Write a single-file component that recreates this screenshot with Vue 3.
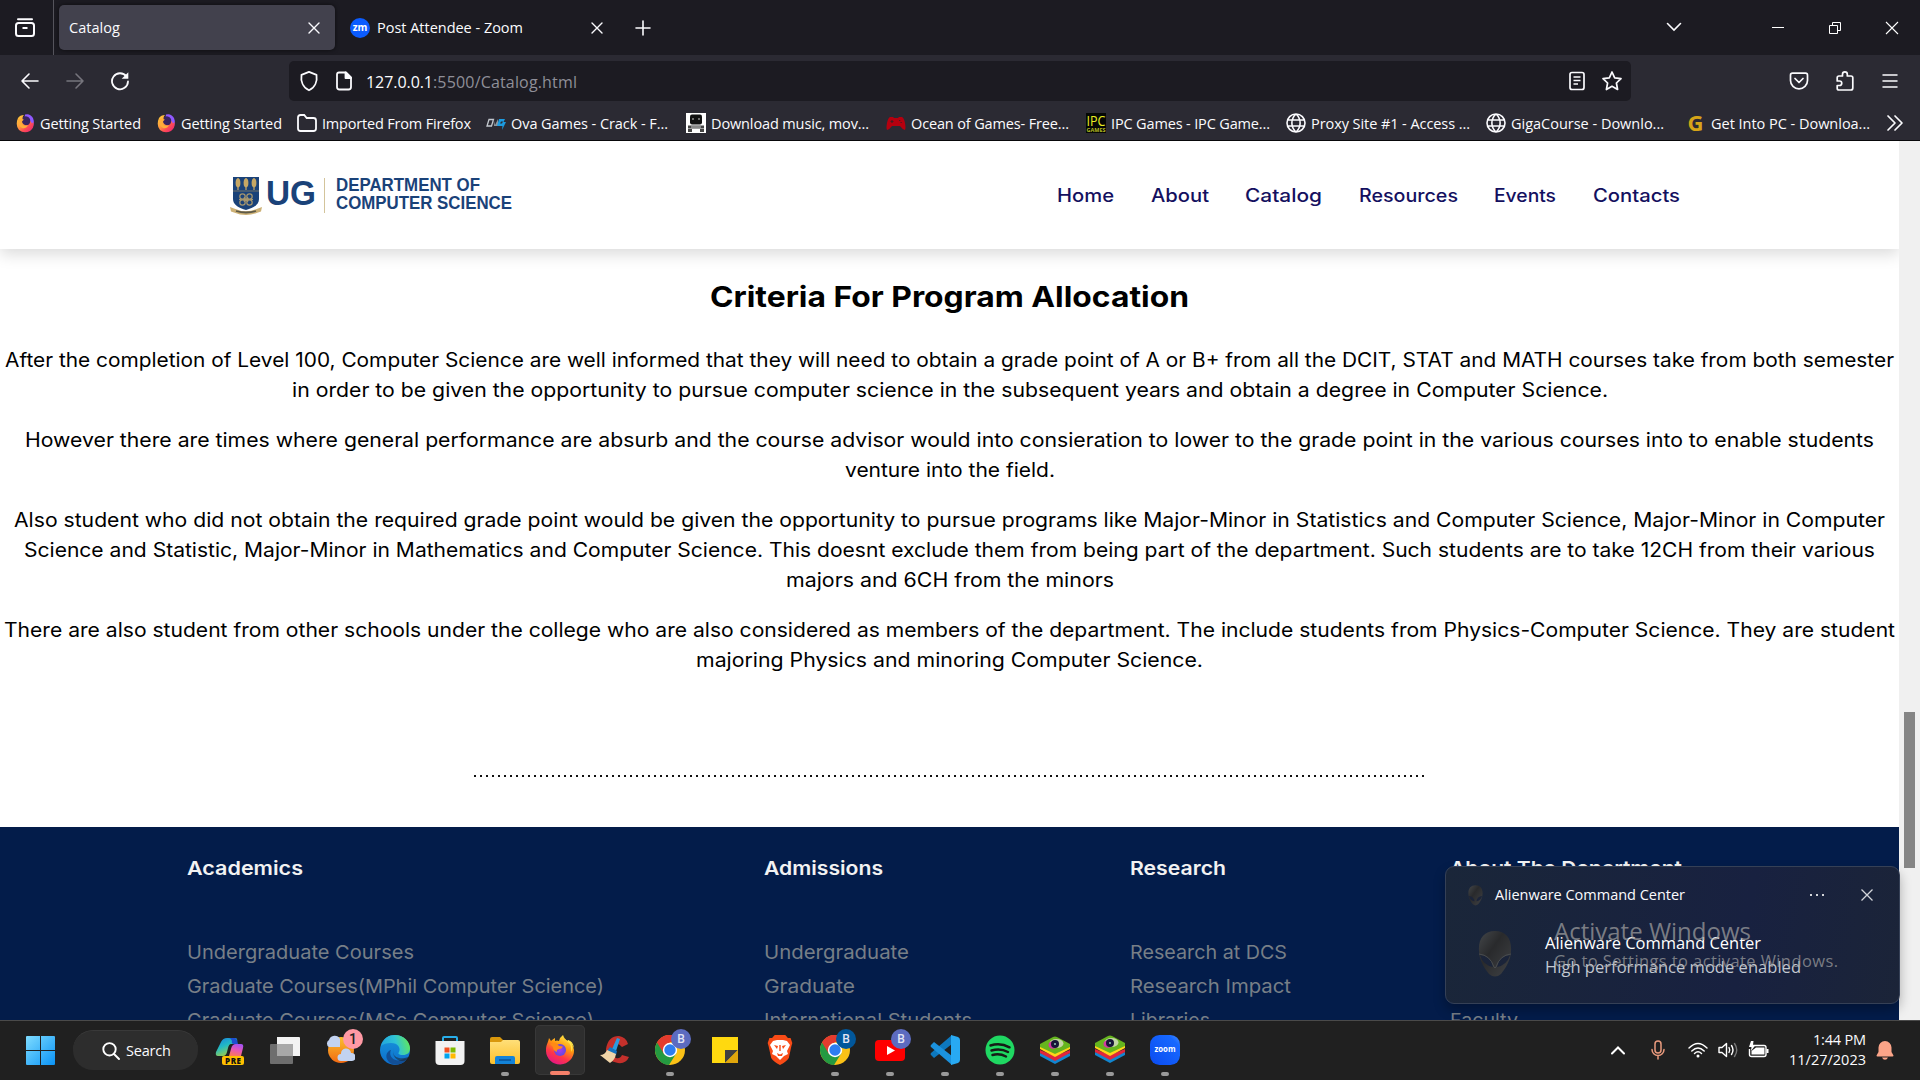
<script setup>
// Fits a line of text to a given width (px): by letter spacing,
// or with the .wide modifier by scaling the line horizontally.
const vFit = {
  mounted(el, { value, modifiers }) {
    const natural = el.getBoundingClientRect().width
    if (modifiers.wide) {
      el.style.transformOrigin = '0 50%'
      el.style.transform = `scaleX(${value / natural})`
      el.style.marginRight = value - natural + 'px'
      return
    }
    const spacing = (value - natural) / (el.textContent.length - 1)
    el.style.letterSpacing = spacing + 'px'
    el.style.marginRight = -spacing + 'px'
  }
}

const bookmarks = [
  { icon: 'fox', text: 'Getting Started', w: 101, cell: 141 },
  { icon: 'fox', text: 'Getting Started', w: 101, cell: 141 },
  { icon: 'folder', text: 'Imported From Firefox', w: 149, cell: 189 },
  { icon: 'ova', text: 'Ova Games - Crack - F...', w: 157, cell: 200 },
  { icon: 'truck', text: 'Download music, mov...', w: 158, cell: 200 },
  { icon: 'pad', text: 'Ocean of Games- Free...', w: 158, cell: 200 },
  { icon: 'ipc', text: 'IPC Games - IPC Game...', w: 159, cell: 200 },
  { icon: 'globe', text: 'Proxy Site #1 - Access ...', w: 159, cell: 200 },
  { icon: 'globe', text: 'GigaCourse - Downlo...', w: 153, cell: 200 },
  { icon: 'g', text: 'Get Into PC - Downloa...', w: 159, cell: 200 }
]

const nav = [
  ['Home', 57, 94],
  ['About', 58, 94],
  ['Catalog', 77, 114],
  ['Resources', 99, 135],
  ['Events', 62, 99],
  ['Contacts', 87, 87]
]

const paragraphs = [
  [
    ['After the completion of Level 100, Computer Science are well informed that they will need to obtain a grade point of A or B+ from all the DCIT, STAT and MATH courses take from both semester', 1889],
    ['in order to be given the opportunity to pursue computer science in the subsequent years and obtain a degree in Computer Science.', 1316]
  ],
  [
    ['However there are times where general performance are absurb and the course advisor would into consieration to lower to the grade point in the various courses into to enable students', 1849],
    ['venture into the field.', 210]
  ],
  [
    ['Also student who did not obtain the required grade point would be given the opportunity to pursue programs like Major-Minor in Statistics and Computer Science, Major-Minor in Computer', 1871],
    ['Science and Statistic, Major-Minor in Mathematics and Computer Science. This doesnt exclude them from being part of the department. Such students are to take 12CH from their various', 1851],
    ['majors and 6CH from the minors', 328]
  ],
  [
    ['There are also student from other schools under the college who are also considered as members of the department. The include students from Physics-Computer Science. They are student', 1891],
    ['majoring Physics and minoring Computer Science.', 507]
  ]
]

const footer = [
  {
    head: ['Academics', 116],
    links: [['Undergraduate Courses', 227], ['Graduate Courses(MPhil Computer Science)', 417], ['Graduate Courses(MSc Computer Science)', 407]]
  },
  { head: ['Admissions', 119], links: [['Undergraduate', 145], ['Graduate', 91], ['International Students', 208]] },
  { head: ['Research', 96], links: [['Research at DCS', 157], ['Research Impact', 161], ['Libraries', 80]] },
  { head: ['About The Department', 232], links: [['', 0], ['', 0], ['Faculty', 68]] }
]

const apps = [
  { id: 'copilot' },
  { id: 'taskview' },
  { id: 'weather', badge: '1', color: '#ff99a4' },
  { id: 'edge' },
  { id: 'store' },
  { id: 'files', open: true },
  { id: 'firefox', active: true },
  { id: 'cc' },
  { id: 'chrome', open: true, badge: 'B', color: '#5c6bc0' },
  { id: 'notes' },
  { id: 'brave' },
  { id: 'chrome', open: true, badge: 'B', color: '#01579b' },
  { id: 'youtube', open: true, badge: 'B', color: '#5c6bc0' },
  { id: 'vscode', open: true },
  { id: 'spotify', open: true },
  { id: 'stack', open: true },
  { id: 'stack', open: true, raised: true },
  { id: 'zoom', open: true }
]
</script>

<template>
  <div class="screen">
    <svg class="defs" width="0" height="0">
      <defs>
        <linearGradient id="gWin" x1="0" y1="0" x2="1" y2="1"><stop offset="0" stop-color="#7fdcff" /><stop offset="1" stop-color="#0a93f5" /></linearGradient>
        <linearGradient id="gFox" x1="0.8" y1="0" x2="0.3" y2="1"><stop offset="0" stop-color="#fff44f" /><stop offset=".4" stop-color="#ff980e" /><stop offset=".7" stop-color="#ff3647" /><stop offset="1" stop-color="#e31587" /></linearGradient>
        <linearGradient id="gFoxS" x1="0" y1="0.2" x2="0.7" y2="1"><stop offset="0" stop-color="#ffc53a" /><stop offset=".45" stop-color="#ff9640" /><stop offset=".75" stop-color="#ff4a55" /><stop offset="1" stop-color="#f0306a" /></linearGradient>
        <radialGradient id="gFoxIn"><stop offset="0" stop-color="#a43bf0" /><stop offset="1" stop-color="#6548dc" /></radialGradient>
        <linearGradient id="gEdge" x1="0" y1="0.4" x2="1" y2="0.2"><stop offset="0" stop-color="#22a5dd" /><stop offset=".5" stop-color="#2fc3d6" /><stop offset="1" stop-color="#66eb50" /></linearGradient>
        <linearGradient id="gEdge2" x1="0" y1="0" x2="0" y2="1"><stop offset="0" stop-color="#1897dc" /><stop offset="1" stop-color="#0d6dcb" /></linearGradient>
        <linearGradient id="gSun" x1="0" y1="0" x2="0" y2="1"><stop offset="0" stop-color="#f9c02f" /><stop offset="1" stop-color="#f26a12" /></linearGradient>
        <linearGradient id="gZoom" x1="0" y1="1" x2="1" y2="0"><stop offset="0" stop-color="#0b4bf0" /><stop offset=".8" stop-color="#1668ff" /><stop offset="1" stop-color="#4a90ff" /></linearGradient>
        <linearGradient id="gFolder" x1="0" y1="0" x2="0" y2="1"><stop offset="0" stop-color="#ffdf79" /><stop offset="1" stop-color="#fcc02c" /></linearGradient>
        <linearGradient id="gCoA" x1="0" y1="0" x2="0.5" y2="1"><stop offset="0" stop-color="#1a7fe0" /><stop offset=".5" stop-color="#21b9c4" /><stop offset="1" stop-color="#a3d044" /></linearGradient>
        <linearGradient id="gCoB" x1="0.6" y1="0" x2="0.3" y2="1"><stop offset="0" stop-color="#a552f2" /><stop offset=".5" stop-color="#e858b4" /><stop offset="1" stop-color="#fb7a55" /></linearGradient>
        <linearGradient id="gAlien" x1="0" y1="0" x2="1" y2="1"><stop offset="0" stop-color="#44474a" /><stop offset=".4" stop-color="#292a2c" /><stop offset="1" stop-color="#404245" /></linearGradient>
      </defs>
    </svg>

    <header class="tabs">
      <div class="view-btn">
        <svg width="24" height="28" viewBox="0 0 24 28" fill="none" stroke="#fbfbfe" stroke-width="2"><path d="M5 5.200h14" stroke-linecap="round" /><path d="M5.500 9h13q2.500 0 2.500 2.500v8q0 2.500-2.500 2.500h-13q-2.500 0-2.500-2.500v-8q0-2.500 2.500-2.500zM9.500 14h5" /></svg>
      </div>
      <div class="tab current">
        <span class="ui" v-fit="51">Catalog</span>
        <svg class="push" width="12" height="12" viewBox="0 0 12 12" stroke="#fbfbfe" stroke-width="1.400" stroke-linecap="round"><path d="M1 1l10 10M11 1L1 11" /></svg>
      </div>
      <div class="tab second">
        <span class="zm">zm</span>
        <span class="ui" v-fit="146">Post Attendee - Zoom</span>
        <svg class="push" width="12" height="12" viewBox="0 0 12 12" stroke="#fbfbfe" stroke-width="1.400" stroke-linecap="round"><path d="M1 1l10 10M11 1L1 11" /></svg>
      </div>
      <svg class="plus" width="16" height="16" viewBox="0 0 16 16" stroke="#fbfbfe" stroke-width="1.600" stroke-linecap="round"><path d="M8 1v14M1 8h14" /></svg>
      <div class="win-btns">
        <svg width="16" height="10" viewBox="0 0 16 10" fill="none" stroke="#fbfbfe" stroke-width="1.600" stroke-linecap="round"><path d="M1.500 1.500L8 8l6.500-6.500" /></svg>
        <svg class="min" width="12" height="12" viewBox="0 0 12 12" stroke="#fff"><path d="M0 5.500h12" /></svg>
        <svg class="rest" width="12" height="12" viewBox="0 0 12 12" fill="none" stroke="#fff"><path d="M.5 3.500h8v8h-8zM3.500 3.500v-3h8v8h-3" /></svg>
        <svg width="14" height="14" viewBox="0 0 14 14" stroke="#fff" stroke-width="1.100"><path d="M1 1l12 12M13 1L1 13" /></svg>
      </div>
    </header>

    <div class="toolbar">
      <div class="history">
        <svg width="20" height="18" viewBox="0 0 20 18" fill="none" stroke="#fbfbfe" stroke-width="1.600" stroke-linecap="round" stroke-linejoin="round"><path d="M18 9H2M9 2L2 9l7 7" /></svg>
        <svg width="20" height="18" viewBox="0 0 20 18" fill="none" stroke="#76757d" stroke-width="1.600" stroke-linecap="round" stroke-linejoin="round"><path d="M2 9h16M11 2l7 7-7 7" /></svg>
        <svg width="20" height="20" viewBox="0 0 20 20" fill="none" stroke="#fbfbfe" stroke-width="1.800" stroke-linecap="round"><path d="M16.500 5.600A8 8 0 1 0 18 10.500" /><path d="M18.300 1.200v6.600h-6.600z" fill="#fbfbfe" stroke="none" /></svg>
      </div>
      <div class="urlbar">
        <svg width="20" height="22" viewBox="0 0 20 22" fill="none" stroke="#fbfbfe" stroke-width="1.800" stroke-linejoin="round"><path d="M10 1.800l7.500 3c.9 6-1.200 12.500-7.500 15.500C3.700 17.300 1.600 10.800 2.500 4.800z" /></svg>
        <svg class="doc" width="18" height="20" viewBox="0 0 18 20" fill="none" stroke="#fbfbfe" stroke-width="1.800" stroke-linejoin="round"><path d="M4 1.500h7l5 5V16q0 2.500-2.500 2.500H4.500Q2 18.500 2 16V3.500q0-2 2-2z" /><path d="M10.500 1.500v5.500H16z" fill="#fbfbfe" /></svg>
        <span class="url"><span class="ui" v-fit="67">127.0.0.1</span><span class="ui dim" v-fit="144">:5500/Catalog.html</span></span>
        <svg class="reader" width="18" height="20" viewBox="0 0 18 20" fill="none" stroke="#fbfbfe" stroke-width="1.700"><rect x="2" y="1.500" width="14" height="17" rx="2" /><path d="M5.500 6h7M5.500 9.500h7M5.500 13h4.500" /></svg>
        <svg class="star" width="22" height="22" viewBox="0 0 22 22" fill="none" stroke="#fbfbfe" stroke-width="1.700" stroke-linejoin="round"><path d="M11 2l2.700 5.800 6.300.8-4.600 4.400 1.200 6.500L11 16.300l-5.600 3.200L6.600 13 2 8.600l6.300-.8z" /></svg>
      </div>
      <div class="tools">
        <svg width="20" height="18" viewBox="0 0 20 18" fill="none" stroke="#fbfbfe" stroke-width="1.700" stroke-linecap="round" stroke-linejoin="round"><path d="M3.500 1.200h13q2 0 2 2V8.500a8.500 8.300 0 0 1-17 0V3.200q0-2 2-2zM6 6.500l4 4 4-4" /></svg>
        <svg width="20" height="22" viewBox="0 0 20 22" fill="none" stroke="#fbfbfe" stroke-width="1.700" stroke-linejoin="round"><path d="M7.500 6V4.300a2.400 2.400 0 0 1 4.800 0V6H16q1.800 0 1.800 1.800V18q0 2-2 2H4q-1.800 0-1.800-1.800V15.500h2.300a2.200 2.200 0 0 0 0-4.500H2.200V7.800Q2.200 6 4 6z" /></svg>
        <svg class="burger" width="16" height="16" viewBox="0 0 16 16" stroke="#fbfbfe" stroke-width="1.500" stroke-linecap="round"><path d="M1 2h14M1 8h14M1 14h14" /></svg>
      </div>
    </div>

    <nav class="bookmarks">
      <a v-for="(b, i) in bookmarks" :key="i" class="bm" :style="{ width: b.cell + 'px' }">
        <svg width="20" height="20" viewBox="0 0 20 20" fill="none">
          <template v-if="b.icon === 'fox'">
            <path d="M10 1.500Q15 0 18 5q2 5-1 10L9 8z" fill="#9059ff" />
            <path d="M3 5Q5 2 9 2q-2 2-1 4 6-1 9 4.500l1.500-1.500q1 6-3.500 9-6 3-11-1-4-5-1-12z" fill="url(#gFoxS)" />
            <path d="M8 4q5-2 7 2 1 4-2 6-4 1-6-3z" fill="#38245f" />
            <path d="M3 6q3-1 6 .8Q6 8 7 11q2 3 6 1-2 4-6 3-4-2-4-9z" fill="#ffad38" />
          </template>
          <path v-else-if="b.icon === 'folder'" d="M1 4.500Q1 2 3.500 2h3.700l2.500 3h6.800Q19 5 19 7.500v8q0 2.500-2.500 2.500h-13Q1 18 1 15.500z" stroke="#fbfbfe" stroke-width="1.800" />
          <template v-else-if="b.icon === 'ova'">
            <path d="M3 6.500h4.500L5.500 13H1z" stroke="#c3c8ce" stroke-width="1.300" />
            <path d="M7.500 6l1.500 6 3-6v7H8z" fill="#8e969d" />
            <path d="M13 6h6l-1.500 3H20l-4 8 .5-4H11z" fill="#1c9be0" /><path d="M15 8.500h2l-1 2h-2z" fill="#2b2a33" />
          </template>
          <template v-else-if="b.icon === 'truck'">
            <path d="M0 0h20v20H0z" fill="#fff" /><rect x="4" y="1.500" width="12" height="10" rx="2" fill="#111" /><path d="M2 12.500h16v3H2zM2 16h4v3H2zM14 16h4v3h-4z" fill="#444" /><path d="M6 6h2M12 6h2M5 14h10" stroke="#ccc" />
          </template>
          <template v-else-if="b.icon === 'pad'">
            <path d="M4 4h3l1 1h4l1-1h3q2 1 3 6t0 7q-3-1-5-4H6q-2 3-5 4-1-2 0-7t3-6z" fill="#b5000f" /><path d="M4.500 8.500h3M6 7v3M13 7.500h1.300M14.500 9.500h1.300" stroke="#4a1a22" stroke-width="1.200" />
          </template>
          <template v-else-if="b.icon === 'ipc'">
            <path d="M0 0h20v20H0z" fill="#050805" /><text x="0.500" y="12.500" textLength="19" lengthAdjust="spacingAndGlyphs" font-size="15" font-family="Open Sans, sans-serif" fill="#e9ee22">IPC</text><text x="0.500" y="18.500" textLength="19" lengthAdjust="spacingAndGlyphs" font-size="6" font-family="Open Sans, sans-serif" font-weight="700" fill="#b6bd22">GAMES</text>
          </template>
          <path v-else-if="b.icon === 'globe'" d="M10 1a9 9 0 1 0 0 18 9 9 0 0 0 0-18zM10 1C4.500 6 4.500 14 10 19c5.500-5 5.500-13 0-18zM1.500 7h17M1.500 13h17" stroke="#fbfbfe" stroke-width="1.600" />
          <text v-else x="1.500" y="17.500" font-size="21" font-weight="700" font-family="Open Sans, sans-serif" fill="#d6a418" textLength="16" lengthAdjust="spacingAndGlyphs">G</text>
        </svg>
        <span class="ui" v-fit="b.w">{{ b.text }}</span>
      </a>
      <svg class="more" width="18" height="18" viewBox="0 0 18 18" fill="none" stroke="#fbfbfe" stroke-width="1.700" stroke-linecap="round" stroke-linejoin="round"><path d="M2 2l7 7-7 7M9 2l7 7-7 7" /></svg>
    </nav>

    <div class="viewport">
      <div class="page">
        <div class="site-head">
          <div class="logo">
            <svg width="34" height="40" viewBox="0 0 34 40">
              <path d="M4 1h26v22c0 6-6 9-13 11C10 32 4 29 4 23z" fill="#1a4279" />
              <path d="M4 15h26" stroke="#8b8468" stroke-width=".8" />
              <g fill="#c6a765"><ellipse cx="9" cy="7" rx="2.400" ry="4.400" /><ellipse cx="17" cy="7" rx="2.400" ry="4.400" /><ellipse cx="25" cy="7" rx="2.400" ry="4.400" /></g>
              <path d="M9 2v12M17 2v12M25 2v12" stroke="#c6a765" stroke-width="1.200" />
              <g fill="none" stroke="#a7976e" stroke-width="1.200"><circle cx="13.500" cy="20.500" r="2.700" /><circle cx="20.500" cy="20.500" r="2.700" /><circle cx="13.500" cy="26.500" r="2.700" /><circle cx="20.500" cy="26.500" r="2.700" /><path d="M10 23.500h14M15 21l4 5M19 21l-4 5" /></g>
              <path d="M1 31l4 1.500q12 5.500 24 0l4-1.500-1 4.500-3 1q-12 5-24 0l-3-1z" fill="#cdb176" /><path d="M7 35q10 3 20 0" stroke="#5e5a48" stroke-width="1.800" fill="none" />
            </svg>
            <span class="ug" v-fit.wide="50">UG</span>
            <span class="rule"></span>
            <span class="dept"><span v-fit.wide="144">DEPARTMENT OF</span><span v-fit.wide="176">COMPUTER SCIENCE</span></span>
          </div>
          <div class="menu">
            <a v-for="n in nav" :key="n[0]" :style="{ width: n[2] + 'px' }"><span v-fit.wide="n[1]">{{ n[0] }}</span></a>
          </div>
        </div>

        <main>
          <h2><span v-fit.wide="479">Criteria For Program Allocation</span></h2>
          <p v-for="(p, i) in paragraphs" :key="i">
            <span v-for="l in p" :key="l[0]" class="line"><span v-fit.wide="l[1]">{{ l[0] }}</span></span>
          </p>
          <div class="dots"></div>
        </main>

        <footer>
          <div v-for="c in footer" :key="c.head[0]">
            <h4><span v-fit.wide="c.head[1]">{{ c.head[0] }}</span></h4>
            <ul><li v-for="(l, i) in c.links" :key="i"><span v-if="l[0]" v-fit.wide="l[1]">{{ l[0] }}</span></li></ul>
          </div>
        </footer>
      </div>
      <div class="scroll"><div class="thumb"></div></div>
    </div>

    <div class="taskbar">
      <svg class="start" width="29" height="29" viewBox="0 0 29 29" fill="url(#gWin)"><path d="M0 1q0-1 1-1h13v14H0zM15 0h13q1 0 1 1v13H15zM0 15h14v14H1q-1 0-1-1zM15 15h14v13q0 1-1 1H15z" /></svg>
      <div class="search">
        <svg width="18" height="18" viewBox="0 0 18 18" fill="none" stroke="#fff" stroke-width="1.900" stroke-linecap="round"><circle cx="7.500" cy="7.300" r="6.200" /><path d="M12 12l5 5" /></svg>
        <span class="ui" v-fit="45">Search</span>
      </div>
      <div class="apps">
        <div v-for="(a, i) in apps" :key="i" class="app" :class="{ active: a.active, raised: a.raised }">
          <svg width="30" height="30" viewBox="0 0 30 30" fill="none">
            <template v-if="a.id === 'copilot'">
              <path d="M6 7q2-4 6-4h8q3 0 2 4l-1 2h-5q-2 0-3 4l-1 4q-1 4-4 4H3q-3 0-2-4z" fill="url(#gCoA)" /><path d="M14 3h6q2 0 3 6h-4q-3 0-2-3-1-3-3-3z" fill="#1d4fd0" />
              <path d="M21 9h5q3 0 2 4l-2 8H14l2-7q1-5 5-5z" fill="url(#gCoB)" />
              <rect x="7" y="21" width="22" height="9" rx="2" fill="#ffc000" /><text x="10" y="28.500" font-family="Open Sans, sans-serif" font-weight="800" font-size="8" fill="#111" textLength="16">PRE</text>
            </template>
            <template v-else-if="a.id === 'taskview'">
              <path d="M7 2h22q1 0 1 1v18H7z" fill="#f3f3f3" /><rect x="0" y="9" width="23" height="20" rx="1" fill="#6e6e6e" /><path d="M7 9h16v12H7z" fill="#a8a8a8" />
            </template>
            <template v-else-if="a.id === 'weather'">
              <circle cx="16" cy="15" r="13" fill="url(#gSun)" /><path d="M4 12a4 4 0 0 1 0-7 6 6 0 0 1 11-1v8z" fill="#c2d3f1" /><path d="M16 26a3.500 3.500 0 0 1 0-7 5 5 0 0 1 10-1 4 4 0 0 1 1 8z" fill="#c2d3f1" />
            </template>
            <template v-else-if="a.id === 'edge'">
              <circle cx="15" cy="15" r="15" fill="url(#gEdge2)" />
              <path d="M1 11C3 3 9 0 15 0c9 0 15 7 15 13 0 5-3 7-7 7-5 0-5-2-4-3 2-4-1-9-8-9C7 8 3 9 1 11z" fill="url(#gEdge)" />
              <path d="M11 15c-3 6 3 12 10 10 3-1 5-2 6-1-5 7-14 7-18 3-5-5-2-11 2-12z" fill="#124f96" /><path d="M14 13q-3 8 5 10 4 1 9-1 1 1-1 3-6 2-9 0-7-4-4-12z" fill="#202020" opacity=".5" />
            </template>
            <template v-else-if="a.id === 'store'">
              <path d="M8 7V3q0-1 1-1h12q1 0 1 1v4" stroke="#28aeea" stroke-width="2" /><path d="M.5 6h29v20q0 4-4 4h-21q-4 0-4-4z" fill="#f2f2f2" /><path d="M9.500 12.500h5v5h-5z" fill="#f25022" /><path d="M15.500 12.500h5v5h-5z" fill="#7fba00" /><path d="M9.500 18.500h5v5h-5z" fill="#00a4ef" /><path d="M15.500 18.500h5v5h-5z" fill="#ffb900" />
            </template>
            <template v-else-if="a.id === 'files'">
              <path d="M0 4q0-2 2-2h8l3 3v4H0z" fill="#d9980c" /><path d="M0 7h11l2-2h15q2 0 2 2v20q0 2-2 2H2q-2 0-2-2z" fill="url(#gFolder)" /><path d="M5 29v-6q0-2 2-2h16q2 0 2 2v6z" fill="#1383d8" /><path d="M9 25h12" stroke="#0a5299" stroke-width="1.500" />
            </template>
            <template v-else-if="a.id === 'firefox'">
              <path d="M1 15C1 10 3 8 4 3l2 3q2-2 4-3v3q2-1 4 0 1-4 4-6 1 4 5 6V5q5 4 6 10a14 14 0 0 1-28 1z" fill="url(#gFox)" />
              <circle cx="15" cy="15" r="6" fill="url(#gFoxIn)" /><path d="M5 9q6-3 9 2l4 .5q-1 2.500-4 2.500-3 1-2 3-4-1-4-5z" fill="#ff8a16" /><path d="M18 0q1 4 5 7t3 10q3-4 0-9l3 5Q28 6 23 5v1q-4-2-5-6z" fill="#ffe34a" />
            </template>
            <template v-else-if="a.id === 'cc'">
              <path d="M28 9l-6 3q-5-6-9 0-3 8 3 11 4 1 6-3l7 2q-3 7-11 6Q6 26 6 14 8 1 19 1q7 1 9 8z" fill="#c4302b" /><path d="M17 3l3 1-4 12-4-2z" fill="#2a9be0" /><path d="M10 12l7 4-1 4-9-4z" fill="#1773bd" /><path d="M7 15l9 4q-1 6-6 9L0 20q5 0 7-5z" fill="#f0d5a8" />
            </template>
            <template v-else-if="a.id === 'chrome'">
              <circle cx="15" cy="15" r="15" fill="#fbc116" /><path d="M2 7.500A15 15 0 0 0 14 30l7.500-12L15 15z" fill="#249a41" /><path d="M2 7.500L9 19l6-12h13A15 15 0 0 0 2 7.500z" fill="#e33b2e" /><circle cx="15" cy="15" r="7.200" fill="#fff" /><circle cx="15" cy="15" r="5.700" fill="#2d7df0" />
            </template>
            <template v-else-if="a.id === 'notes'"><path d="M2 2h26v26H2z" fill="#ffd90f" /><path d="M15 28V15h13z" fill="#404040" /><path d="M15 28l13-13v13z" fill="#e0a60c" /></template>
            <template v-else-if="a.id === 'brave'">
              <path d="M9 0h12l3 3h3l2 5-1 3-3 12q-3 4-10 7-7-3-10-7L2 11 1 8l2-5h3z" transform="matrix(.88 0 0 1 1.800 0)" fill="#f94b16" /><path d="M8 6l4-1h6l4 1 3 4-3 6 1 3-4 2-4 4-4-4-4-2 1-3-3-6z" fill="#fff" /><path d="M9 10l4 1-1 3zM21 10l-4 1 1 3zM12 18l3 1.500 3-1.500-1 3h-4zM14.300 10h1.400v6h-1.400z" fill="#f94b16" />
            </template>
            <template v-else-if="a.id === 'youtube'"><rect y="5" width="30" height="21" rx="4" fill="#f00" /><path d="M12 11l8 4.500-8 4.500z" fill="#fff" /></template>
            <template v-else-if="a.id === 'vscode'">
              <path d="M22 0v9L4 23l-3-3q-1-1 0-2z" fill="#0d78be" /><path d="M22 30v-9L4 7l-3 3q-1 1 0 2z" fill="#1b92de" /><path d="M21 0l7 2q2 1 2 3v20q0 2-2 3l-7 2z" fill="#28a9f2" />
            </template>
            <template v-else-if="a.id === 'spotify'"><circle cx="15" cy="15" r="14.500" fill="#1fd862" /><path d="M5.500 10.500q10-3 19 1.800M6.500 15.500q9-2.500 16.500 1.500M7.500 20q7-2 13.500 1.500" stroke="#161b17" stroke-width="2.500" stroke-linecap="round" /></template>
            <template v-else-if="a.id === 'stack'">
              <path d="M0 18l15 5 15-5v3l-15 8-15-8z" fill="#1286cf" /><path d="M0 15l15 6 15-6v3l-15 8-15-8z" fill="#e0263c" /><path d="M0 11l15 7 15-7v3l-15 8-15-8z" fill="#ffd51a" /><path d="M0 9l13-7q2-1 4 0l13 7v3l-15 7-15-7z" fill="#66b51e" /><ellipse cx="16.500" cy="8.500" rx="7" ry="4.500" fill="#c4d6a5" /><ellipse cx="13" cy="10" rx="4.500" ry="3.800" fill="#d13aa2" /><circle cx="15" cy="9" r="4" fill="#171538" /><circle cx="15" cy="9" r="1" fill="#9cb" />
            </template>
            <template v-else>
              <rect width="30" height="30" rx="9.500" fill="url(#gZoom)" /><text x="4.500" y="17" font-family="Open Sans, sans-serif" font-weight="700" font-size="8.500" fill="#fff" textLength="21" lengthAdjust="spacingAndGlyphs">zoom</text>
            </template>
          </svg>
          <b v-if="a.badge" class="badge" :class="{ num: a.badge === '1' }" :style="{ background: a.color }">{{ a.badge }}</b>
          <i v-if="a.open || a.active" class="mark"></i>
        </div>
      </div>
      <div class="tray">
        <svg width="14" height="9" viewBox="0 0 14 9" fill="none" stroke="#fff" stroke-width="2" stroke-linecap="round"><path d="M1 7.500l6-6 6 6" /></svg>
        <svg class="mic" width="14" height="20" viewBox="0 0 14 20" fill="none" stroke="#e99a7d" stroke-width="1.500" stroke-linecap="round"><rect x="4" y="1" width="6" height="12" rx="3" /><path d="M1 9.500a6 6 0 0 0 12 0M7 15.500V19" /></svg>
        <svg class="wifi" width="20" height="16" viewBox="0 0 20 16" fill="none" stroke="#fff" stroke-width="1.400" stroke-linecap="round"><path d="M1 6q9-9 18 0M3.800 9q6.200-6 12.400 0M6.500 11.500q3.500-3.300 7 0" /><circle cx="10" cy="14" r="1.500" fill="#fff" stroke="none" /></svg>
        <svg class="vol" width="20" height="16" viewBox="0 0 20 16" fill="none" stroke="#fff" stroke-width="1.400" stroke-linecap="round" stroke-linejoin="round"><path d="M1 5.500h3L8.500 1.500v13L4 10.500H1zM11 5.500q1.500 2.500 0 5M13.500 3.500q3 4.500 0 9" /><path d="M16.500 1.500q4.500 6.500 0 13" stroke="#777" /></svg>
        <svg class="bat" width="21" height="18" viewBox="0 0 21 18"><path d="M5 4.500h11q2 0 2 2v7q0 2-2 2H3.500q-2 0-2-2V8" fill="none" stroke="#fff" stroke-width="1.400" /><path d="M8 6.500h8.500v7H3.500V10zM18.500 8h2v4h-2z" fill="#fff" /><path d="M3 0L1 6h2.500L3 10l4.500-6H5l.5-4z" fill="#fff" /></svg>
        <div class="clock"><span class="ui" v-fit="53">1:44 PM</span><span class="ui" v-fit="77">11/27/2023</span></div>
        <svg class="bell" width="18" height="20" viewBox="0 0 18 20" fill="#fba488"><path d="M9 1a6.500 6.500 0 0 1 6.500 6.500V12l2 3.500q0 1-1 1h-15q-1 0-1-1l2-3.500V7.500A6.500 6.500 0 0 1 9 1zM6 17.500h6q-1 2.300-3 2.300t-3-2.300z" /></svg>
      </div>
    </div>

    <section class="toast">
      <div class="toast-head">
        <svg width="15" height="21" viewBox="0 0 34 46"><path d="M17 0C6 0 0 8 1 20c0 8 5 17 10 23q6 5 12 0c5-6 10-15 10-23C34 8 28 0 17 0z" fill="url(#gAlien)" /><path d="M2 24q11 1 13 12-10-2-13-12zM32 24q-11 1-13 12 10-2 13-12z" fill="#1b2439" /></svg>
        <span class="ui" v-fit="190">Alienware Command Center</span>
        <span class="dots3"><i></i><i></i><i></i></span>
        <svg width="12" height="12" viewBox="0 0 12 12" stroke="#d3d5da" stroke-width="1.300"><path d="M.5.500l11 11M11.500.500l-11 11" /></svg>
      </div>
      <div class="toast-body">
        <svg width="34" height="46" viewBox="0 0 34 46"><path d="M17 0C6 0 0 8 1 20c0 8 5 17 10 23q6 5 12 0c5-6 10-15 10-23C34 8 28 0 17 0z" fill="url(#gAlien)" /><path d="M2 24q11 1 13 12-10-2-13-12zM32 24q-11 1-13 12 10-2 13-12z" fill="#1b2439" /><path d="M1 23q11 1 15 13 1 2 2 0 4-12 15-13" fill="none" stroke="#4c4f52" stroke-width=".9" /></svg>
        <div class="msg"><span v-fit="216">Alienware Command Center</span><span class="sub" v-fit="256">High performance mode enabled</span></div>
      </div>
    </section>
    <div class="watermark"><span class="big" v-fit="197">Activate Windows</span><span v-fit="284">Go to Settings to activate Windows.</span></div>
  </div>
</template>

<style>
body { overflow: hidden; }
</style>

<style scoped>
* { box-sizing: border-box; }
.screen { position: relative; width: 1920px; height: 1080px; overflow: hidden; display: flex; flex-direction: column; background: #fff; font-family: "Open Sans", sans-serif; }
.defs { position: absolute; }
svg { flex: none; display: block; }
span { white-space: nowrap; }
.ui { font-size: 14.500px; color: #fbfbfe; line-height: 20px; display: inline-block; padding-top: 1px; }
.tabs { height: 55px; background: #1c1b22; display: flex; align-items: center; flex: none; }
.view-btn { width: 54px; height: 55px; border-right: 1px solid #55545c; display: flex; align-items: center; padding-left: 13px; }
.tab { display: flex; align-items: center; height: 45px; border-radius: 5px; padding: 0 15px 0 10px; }
.current { margin-left: 5px; width: 276px; background: #42414d; box-shadow: 0 0 4px rgba(0, 0, 0, .6); }
.second { width: 278px; margin-left: 5px; gap: 7px; }
.push { margin-left: auto; }
.zm { width: 20px; height: 20px; border-radius: 50%; background: #0b5cff; color: #fff; font-size: 10px; font-weight: 700; line-height: 18px; text-align: center; }
.plus { margin-left: 17px; }
.win-btns { margin-left: auto; display: flex; align-items: center; padding-right: 21px; }
.win-btns svg:first-child { margin-bottom: 1px; }
.min { margin-left: 90px; }
.rest { margin: 0 44px 0 45px; }
.toolbar { height: 51px; background: #2b2a33; display: flex; align-items: center; flex: none; }
.history { width: 289px; padding-left: 20px; display: flex; align-items: center; gap: 25px; }
.urlbar { width: 1342px; height: 40px; background: #1c1b22; border-radius: 5px; display: flex; align-items: center; padding: 0 8px 0 10px; }
.doc { margin-left: 16px; }
.url { display: flex; margin-left: 13px; }
.url .ui { font-size: 16px; padding-top: 2px; }
.ui.dim { color: #8f8f98; }
.reader { margin-left: auto; }
.star { margin-left: 15px; }
.tools { margin-left: auto; display: flex; align-items: center; gap: 26px; padding-right: 22px; }
.burger { margin-left: 1px; }
.bookmarks { height: 35px; background: #2b2a33; border-bottom: 1px solid #08080a; display: flex; align-items: center; padding-left: 15px; flex: none; }
.bm { display: flex; align-items: center; gap: 5px; flex: none; }
.viewport { height: 879px; display: flex; overflow: hidden; flex: none; }
.page { width: 1899px; font-family: "Inter", sans-serif; color: #000; display: flex; flex-direction: column; }
.page span { display: inline-block; }
.site-head { height: 108px; flex: none; display: flex; align-items: center; padding: 2px 0 0 229px; box-shadow: 0 5px 15px rgba(0, 0, 0, .15); }
.logo { display: flex; align-items: center; color: #1a4279; font-family: "Liberation Sans", sans-serif; font-weight: 700; }
.ug { font-size: 35px; line-height: 36px; margin-left: 3px; padding-bottom: 6px; }
.rule { width: 1px; height: 35px; background: #d3c49b; margin: 0 11px 2px 8px; }
.dept { display: flex !important; flex-direction: column; align-items: flex-start; font-size: 17.500px; line-height: 18px; padding-bottom: 4px; }
.menu { margin-left: auto; margin-right: 219px; display: flex; font-size: 18px; font-weight: 500; color: #14105f; line-height: 28px; }
main { height: 578px; flex: none; text-align: center; padding-top: 25px; }
h2 { margin: 0 0 26px; height: 45px; line-height: 45px; font-size: 29px; font-weight: 700; }
p { margin: 0 0 20px; font-size: 19.500px; line-height: 30px; }
.line { display: block !important; }
.dots { width: 953px; height: 2px; margin: 100px auto 0 474px; background: repeating-linear-gradient(90deg, #111 0 2px, transparent 2px 6px); }
footer { height: 193px; background: #031c4a; flex: none; display: grid; grid-template-columns: 576.500px 366.500px 320px 1fr; padding-left: 187px; overflow: hidden; }
h4 { margin: 27px 0 52px; font-size: 19px; line-height: 30px; font-weight: 600; color: #f2f2f2; }
ul { list-style: none; margin: 0; padding: 0; font-size: 19px; font-weight: 400; color: #777f87; }
li { height: 34px; line-height: 34px; }
.scroll { width: 21px; background: #f0f0f0; padding: 571px 5px 0; }
.thumb { height: 156px; width: 11px; background: #858585; }
.taskbar { height: 60px; flex: none; background: #202020; border-top: 1px solid #4a4a4a; display: flex; align-items: center; padding: 0 0 1px 26px; }
.search { width: 125px; height: 40px; border-radius: 20px; background: #2d2d2d; border-top: 1px solid #393939; margin-left: 18px; display: flex; align-items: center; padding-left: 29px; gap: 6px; }
.apps { display: flex; margin-left: 7px; gap: 5px; }
.app { position: relative; width: 50px; height: 50px; border-radius: 5px; display: flex; align-items: center; justify-content: center; }
.active { background: #2e2e2e; box-shadow: inset 0 0 0 1px #383838; }
.raised svg { margin-bottom: 2px; }
.mark { position: absolute; bottom: -1px; left: 21px; width: 8px; height: 4px; border-radius: 2px; background: #9a9a9a; }
.active .mark { left: 15px; width: 20px; bottom: 0; background: #f58069; }
.badge { position: absolute; left: 26px; top: 4px; width: 20px; height: 20px; border-radius: 50%; color: #e3e5f5; font: 500 12px/20px "Roboto", sans-serif; text-align: center; }
.badge.num { color: #222; font-size: 14px; left: 28px; }
.tray { margin-left: auto; display: flex; align-items: center; padding-right: 26px; }
.mic { margin-left: 26px; }
.wifi { margin-left: 23px; }
.vol { margin-left: 10px; }
.bat { margin-left: 10px; }
.clock { display: flex; flex-direction: column; align-items: flex-end; width: 97px; }
.clock .ui { padding: 0; }
.bell { margin-left: 10px; }
.toast { position: absolute; left: 1445px; top: 866px; width: 455px; height: 138px; border-radius: 9px; border: 1px solid #354056; background: linear-gradient(100deg, #1a2639, #182140 65%, #1b2438); box-shadow: 0 6px 12px rgba(0, 0, 0, .28); }
.toast-head { display: flex; align-items: center; height: 56px; padding: 0 26px 0 22px; }
.toast-head .ui { margin-left: 12px; padding: 0; }
.dots3 { display: flex; gap: 4px; margin-left: auto; margin-right: 37px; }
.dots3 i { width: 2px; height: 2px; background: #d3d5da; }
.toast-body { display: flex; padding: 8px 0 0 32px; }
.msg { display: flex; flex-direction: column; align-items: flex-start; margin-left: 33px; font-size: 16.500px; line-height: 24px; color: #fff; }
.sub { color: #c3c8d0; }
.watermark { position: absolute; left: 1554px; top: 913px; display: flex; flex-direction: column; align-items: flex-start; font-size: 16.500px; line-height: 24px; color: rgba(160, 160, 160, .72); }
.big { font-size: 24px; line-height: 36px; }
</style>
